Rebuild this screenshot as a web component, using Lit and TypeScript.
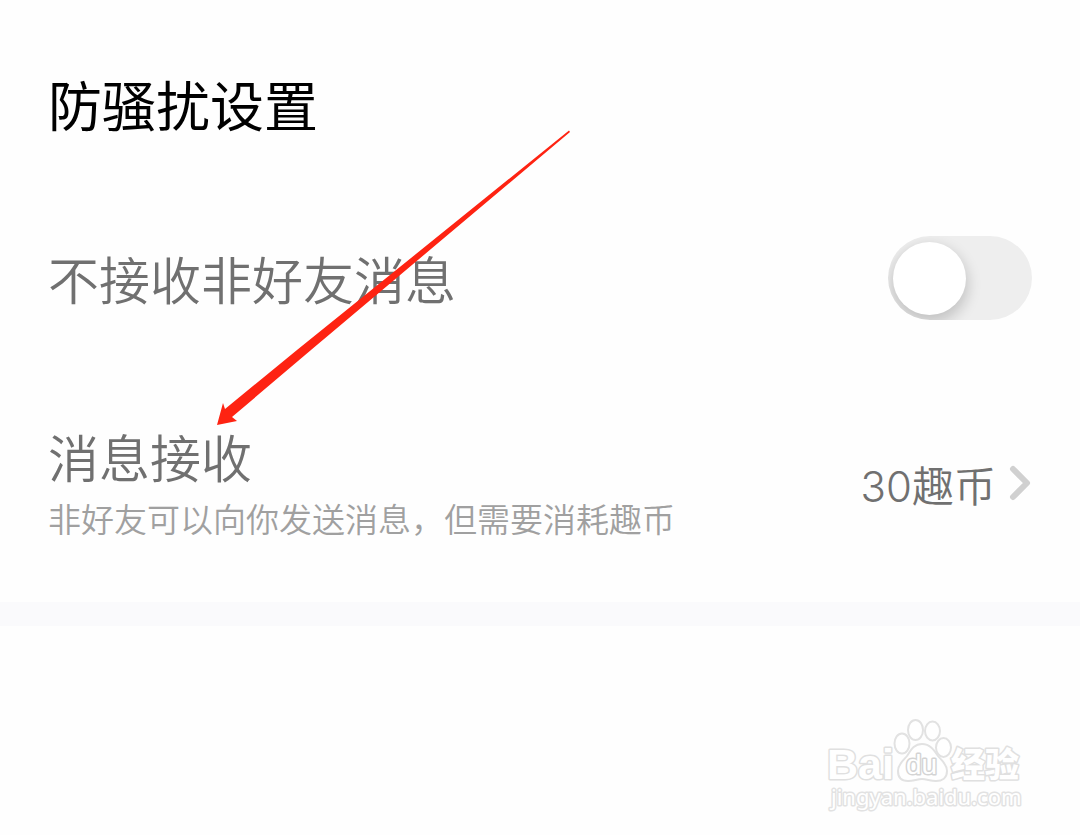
import { LitElement, html, css } from "lit";
import { customElement, property, state } from "lit/decorators.js";

@customElement("toggle-switch")
class ToggleSwitch extends LitElement {
  @property() label = "";
  @property({ type: Boolean }) checked = false;

  static styles = css`
    :host { display: block; flex: none; }
    .switch {
      appearance: none;
      display: flex;
      align-items: center;
      box-sizing: border-box;
      width: 144px;
      height: 84px;
      margin: 0;
      padding: 0 5px;
      border-radius: 42px;
      background: #eeeeee;
      overflow: hidden;
      cursor: pointer;
    }
    .switch::before {
      content: "";
      width: 73px;
      height: 73px;
      border-radius: 50%;
      background: #fff;
      box-shadow: 0 6px 14px 2px rgba(0, 0, 0, 0.18);
    }
    .switch:checked { justify-content: flex-end; background: #ffd84a; }
  `;

  render() {
    return html`<input class="switch" type="checkbox" role="switch" aria-label=${this.label} .checked=${this.checked} />`;
  }
}

@customElement("site-mark")
class SiteMark extends LitElement {
  static styles = css`
    :host { display: block; }
    .mark { display: block; width: 204px; height: 100px; }
    .shape { fill: #fff; stroke: #e2e2e2; stroke-width: 2; }
    .word {
      fill: #fff;
      stroke: #e0e0e0;
      stroke-width: 3;
      stroke-linejoin: round;
      paint-order: stroke;
      font-family: "Liberation Sans", sans-serif;
      font-weight: 700;
    }
    .latin { font-size: 43px; }
    .du { font-size: 28px; font-weight: 400; stroke: #d4d4d4; }
    .han { font-family: "Noto Sans CJK SC", sans-serif; font-size: 34px; font-weight: 900; }
    .host { font-family: "Noto Sans", sans-serif; font-size: 22px; font-weight: 400; stroke: #e2e2e2; }
  `;

  render() {
    return html`
      <svg class="mark" viewBox="822 714 204 100" role="img" aria-label="Baidu 经验">
        <ellipse class="shape" cx="902" cy="743.5" rx="7.5" ry="10" />
        <ellipse class="shape" cx="915.5" cy="730" rx="7.5" ry="10" />
        <ellipse class="shape" cx="932.5" cy="731" rx="7.5" ry="9.5" />
        <ellipse class="shape" cx="943.5" cy="747.5" rx="7.5" ry="9.5" />
        <path class="shape" d="M922 744C930 744 934 750 938 756C942 761 947 764 947 771C947 778 942 781 936 781C930 781 927 779 922 779C917 779 914 781 908 781C902 781 898 778 898 771C898 764 903 761 907 756C911 750 914 744 922 744Z" />
        <text class="word latin" x="827" y="779">Bai</text>
        <text class="word du" x="906" y="774">du</text>
        <text class="word han" x="951" y="777">经验</text>
        <text class="word host" x="831" y="805">jingyan.baidu.com</text>
      </svg>
    `;
  }
}

@customElement("app-root")
class AppRoot extends LitElement {
  @state() private price = "30趣币";

  static styles = css`
    :host {
      display: flex;
      flex-direction: column;
      position: relative;
      min-height: 100vh;
      box-sizing: border-box;
      overflow: hidden;
      background: #fefefe;
      color: #707070;
      font-family: "Noto Sans CJK SC", sans-serif;
    }
    .settings {
      padding: 68px 48px 60px;
      border-bottom: 24px solid #fafafc;
    }
    .title {
      margin: 0;
      font-size: 54px;
      line-height: 72px;
      font-weight: 400;
      color: #000;
    }
    .row {
      display: flex;
      align-items: center;
      justify-content: space-between;
      width: 100%;
      padding: 0;
      border: 0;
      background: none;
      color: inherit;
      font: inherit;
      text-align: left;
    }
    .first { margin-top: 96px; }
    .second { margin-top: 100px; cursor: pointer; }
    .name { display: block; font-size: 51px; line-height: 72px; font-weight: 350; }
    .hint { display: block; padding-top: 2px; font-size: 33px; line-height: 48px; color: #a0a0a0; font-weight: 350; }
    .value { display: flex; align-items: center; gap: 12px; padding-top: 6px; }
    .amount {
      padding-top: 6px;
      font-family: Inter, "Noto Sans CJK SC", sans-serif;
      font-size: 42px;
      font-weight: 350;
      line-height: 60px;
    }
    .chevron { width: 24px; height: 40px; }
    .chevron path { fill: none; stroke: #d0d0d0; stroke-width: 6; stroke-linecap: round; stroke-linejoin: round; }
    .pointer { position: absolute; left: 216px; top: 130px; width: 356px; height: 296px; pointer-events: none; }
    .footer { display: flex; justify-content: flex-end; margin-top: auto; padding: 0 54px 21px 0; }
  `;

  render() {
    return html`
      <main class="settings">
        <h1 class="title">防骚扰设置</h1>
        <div class="row first">
          <span class="name">不接收非好友消息</span>
          <toggle-switch label="不接收非好友消息"></toggle-switch>
        </div>
        <button class="row second" type="button">
          <span>
            <span class="name">消息接收</span>
            <span class="hint">非好友可以向你发送消息，但需要消耗趣币</span>
          </span>
          <span class="value">
            <span class="amount">${this.price}</span>
            <svg class="chevron" viewBox="0 0 24 40" aria-hidden="true"><path d="M5 5L19 19L5 33" /></svg>
          </span>
        </button>
      </main>
      <footer class="footer"><site-mark></site-mark></footer>
      <svg class="pointer" viewBox="216 130 356 296" aria-hidden="true">
        <path fill="#fe2312" d="M569 130.5L570 132L311 350L232 417L237 421L217 425L223 403L225 409L297 350Z" />
      </svg>
    `;
  }
}
